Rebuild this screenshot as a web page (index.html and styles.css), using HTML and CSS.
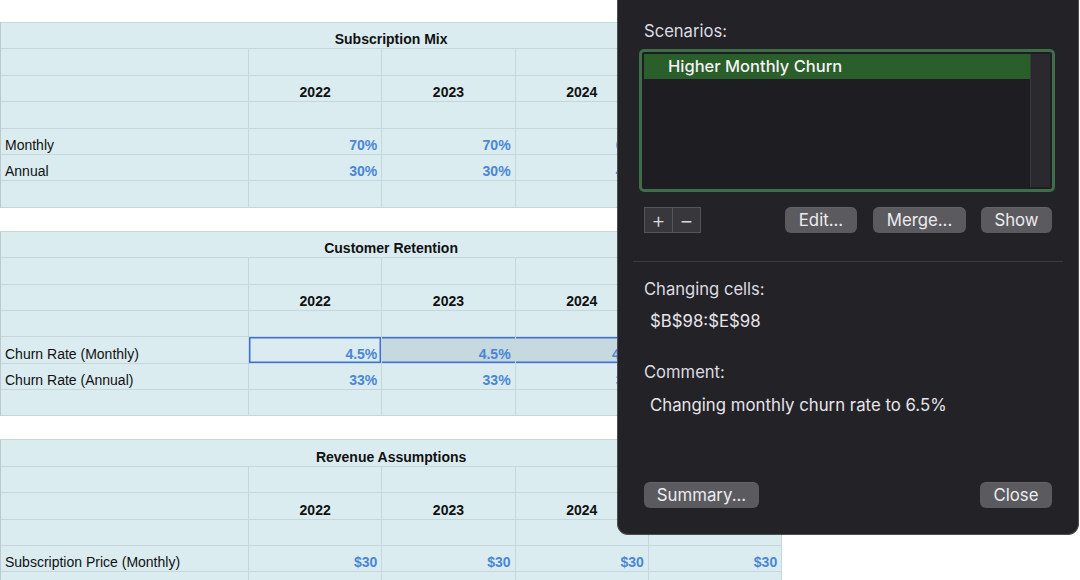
FILE: index.html
```html
<!DOCTYPE html>
<html>
<head>
<meta charset="utf-8">
<link rel="stylesheet" href="styles.css">
</head>
<body>
<div class="sheet">
  <div class="tbl">
    <div class="c title">Subscription Mix</div>
    <div class="c"></div><div class="c"></div><div class="c"></div><div class="c"></div><div class="c"></div>
    <div class="c"></div><div class="c yr">2022</div><div class="c yr">2023</div><div class="c yr">2024</div><div class="c yr"></div>
    <div class="c"></div><div class="c"></div><div class="c"></div><div class="c"></div><div class="c"></div>
    <div class="c lbl">Monthly</div><div class="c val">70%</div><div class="c val">70%</div><div class="c val">60%</div><div class="c val">60%</div>
    <div class="c lbl">Annual</div><div class="c val">30%</div><div class="c val">30%</div><div class="c val">40%</div><div class="c val">40%</div>
    <div class="c"></div><div class="c"></div><div class="c"></div><div class="c"></div><div class="c"></div>
  </div>
  <div class="tbl">
    <div class="c title">Customer Retention</div>
    <div class="c"></div><div class="c"></div><div class="c"></div><div class="c"></div><div class="c"></div>
    <div class="c"></div><div class="c yr">2022</div><div class="c yr">2023</div><div class="c yr">2024</div><div class="c yr"></div>
    <div class="c"></div><div class="c"></div><div class="c"></div><div class="c"></div><div class="c"></div>
    <div class="c lbl">Churn Rate (Monthly)</div><div class="c val active">4.5%</div><div class="c val range">4.5%</div><div class="c val range">4.5%</div><div class="c val range">4.5%</div>
    <div class="c lbl">Churn Rate (Annual)</div><div class="c val">33%</div><div class="c val">33%</div><div class="c val">33%</div><div class="c val">33%</div>
    <div class="c"></div><div class="c"></div><div class="c"></div><div class="c"></div><div class="c"></div>
  </div>
  <div class="tbl">
    <div class="c title">Revenue Assumptions</div>
    <div class="c"></div><div class="c"></div><div class="c"></div><div class="c"></div><div class="c"></div>
    <div class="c"></div><div class="c yr">2022</div><div class="c yr">2023</div><div class="c yr">2024</div><div class="c yr"></div>
    <div class="c"></div><div class="c"></div><div class="c"></div><div class="c"></div><div class="c"></div>
    <div class="c lbl">Subscription Price (Monthly)</div><div class="c val">$30</div><div class="c val">$30</div><div class="c val">$30</div><div class="c val">$30</div>
    <div class="c"></div><div class="c"></div><div class="c"></div><div class="c"></div><div class="c"></div>
  </div>
</div>

<div class="dialog">
  <div class="label">Scenarios:</div>
  <div class="listbox">
    <div class="list">
      <div class="item sel">Higher Monthly Churn</div>
    </div>
    <div class="track"></div>
  </div>
  <div class="btnrow">
    <div class="seg"><span class="segb">+</span><span class="segb">&minus;</span></div>
    <div class="spacer"></div>
    <div class="btn b-edit">Edit...</div>
    <div class="btn b-merge">Merge...</div>
    <div class="btn b-show">Show</div>
  </div>
  <div class="sep"></div>
  <div class="label l-cells">Changing cells:</div>
  <div class="value v-cells">$B$98:$E$98</div>
  <div class="label l-comment">Comment:</div>
  <div class="value v-comment">Changing monthly churn rate to 6.5%</div>
  <div class="btnrow bottom">
    <div class="btn b-summary">Summary...</div>
    <div class="spacer"></div>
    <div class="btn b-close">Close</div>
  </div>
</div>
</body>
</html>
```
FILE: styles.css
```css
html, body {
  margin: 0;
  padding: 0;
  background: #ffffff;
  width: 1080px;
  height: 580px;
  overflow: hidden;
}
body {
  position: relative;
  font-family: "Liberation Sans", Arial, sans-serif;
}
.sheet {
  display: flex;
  flex-direction: column;
  gap: 23px;
  padding-top: 22px;
}
.tbl {
  display: grid;
  grid-template-columns: 248px 133.3px 133.3px 133.3px 133.3px;
  grid-auto-rows: 26.4px;
  width: 781px;
  background: #daecf0;
  border-top: 1px solid #c7d6db;
  border-left: 1px solid #bfc9cd;
  box-sizing: border-box;
}
.c {
  border-right: 1px solid #c6d7dc;
  border-bottom: 1px solid #c6d7dc;
  display: flex;
  align-items: flex-end;
  padding: 0 4px 1px 4px;
  font-size: 14px;
  line-height: 16px;
  color: #111111;
  white-space: nowrap;
  overflow: hidden;
}
.title {
  grid-column: 1 / span 5;
  justify-content: center;
  font-weight: bold;
}
.yr {
  justify-content: center;
  font-weight: bold;
}
.lbl {
  padding-left: 4px;
}
.val {
  justify-content: flex-end;
  font-weight: bold;
  color: #4a86d6;
}
.active {
  box-shadow: inset 0 0 0 1.5px #3c72da;
}
.range {
  background: #c6d9de;
  box-shadow: inset 0 1.5px 0 #3c72da, inset 0 -1.5px 0 #3c72da;
}

.dialog {
  position: absolute;
  left: 617px;
  top: 0;
  width: 462px;
  height: 535px;
  box-sizing: border-box;
  background: #232227;
  border: 1px solid #4e4d52;
  border-top: none;
  border-radius: 0 0 11px 11px;
  padding: 20px 26px 26px 26px;
  display: flex;
  flex-direction: column;
  font-family: Inter, "Noto Sans", sans-serif;
  color: #dedde2;
}
.label {
  font-size: 16.6px;
  line-height: 22px;
  color: #dddce1;
}
.value {
  font-size: 16.8px;
  line-height: 22px;
  padding-left: 6px;
  color: #e6e5ea;
}
.listbox {
  margin: 7px 0 0 -5px;
  width: 416px;
  height: 143px;
  box-sizing: border-box;
  border: 3px solid #3f6c49;
  border-radius: 5px;
  padding: 2px;
  background: #1e1d22;
  display: flex;
}
.list {
  flex: 1;
}
.item {
  height: 25px;
  line-height: 25px;
  padding-left: 24px;
  font-size: 16.5px;
  font-weight: 500;
  color: #f4f4f4;
}
.item.sel {
  background: #2a5e2a;
}
.track {
  width: 20px;
  background: #2a292d;
  border-left: 1px solid #3a393e;
  box-sizing: border-box;
}
.btnrow {
  display: flex;
  align-items: center;
  margin-top: 15px;
  gap: 16px;
}
.spacer {
  flex: 1;
}
.seg {
  display: flex;
  height: 26px;
  border: 1px solid #55545a;
  box-sizing: border-box;
  background: #38373c;
}
.segb {
  width: 27px;
  height: 24px;
  display: flex;
  align-items: center;
  justify-content: center;
  font-size: 22px;
  font-weight: 300;
  line-height: 24px;
  color: #d8d8dc;
}
.segb + .segb {
  border-left: 1px solid #55545a;
}
.btn {
  height: 26px;
  line-height: 26px;
  border-radius: 6px;
  background: #5b5a5f;
  color: #ececef;
  font-size: 16.8px;
  text-align: center;
  box-shadow: 0 0.5px 0 rgba(255,255,255,0.12) inset;
}
.b-edit { width: 72px; }
.b-merge { width: 93px; }
.b-show { width: 71px; margin-left: -1px; }
.b-summary { width: 115px; }
.b-close { width: 72px; }
.sep {
  margin: 28px -11px 0 -11px;
  height: 1px;
  background: #3b3a3f;
}
.l-cells { margin-top: 16px; }
.v-cells { margin-top: 10px; }
.l-comment { margin-top: 29px; }
.v-comment { margin-top: 11px; }
.btnrow.bottom {
  margin-top: auto;
}
```
